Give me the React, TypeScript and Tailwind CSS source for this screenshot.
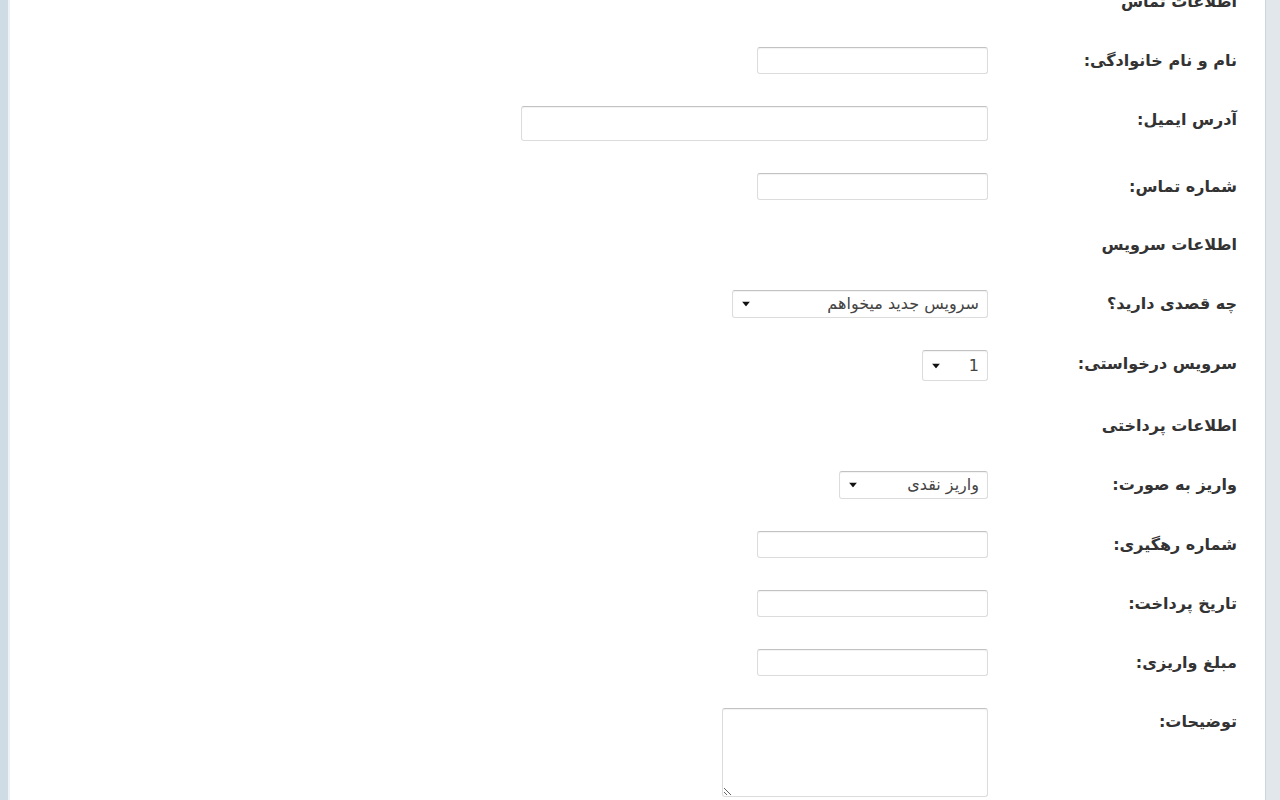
import type { ReactNode } from "react";

const font = { fontFamily: '"DejaVu Sans", Tahoma, sans-serif' };

const inputCls =
  "h-[27px] bg-white rounded-[3px] border border-[#dcdcdc] border-t-[#c2c2c2] shadow-[inset_0_1px_1px_rgba(0,0,0,0.05)] outline-none";

function Row({ label, children }: { label: string; children?: ReactNode }) {
  return (
    <div className="flex items-start">
      <div className="w-[249px] h-[27px] shrink-0 text-right leading-[28px] text-[16px] font-bold text-[#333]">{label}</div>
      {children}
    </div>
  );
}

function Header({ label }: { label: string }) {
  return (
    <div className="h-[26px] w-[249px] text-right leading-[26px] text-[16px] font-bold text-[#333]">{label}</div>
  );
}

function Select({ value, width, height }: { value: string; width: string; height: string }) {
  return (
    <div className={`relative ${width} ${height}`}>
      <select
        defaultValue={value}
        className={`${inputCls} ${height} w-full appearance-none pr-[8px] pl-[24px] text-[16px] text-[#444]`}
        style={font}
      >
        <option>{value}</option>
      </select>
      <svg className="pointer-events-none absolute left-[10px] top-1/2 -translate-y-1/2" width="8" height="5" viewBox="0 0 8 5">
        <path d="M0 0h8L4 5z" fill="#111" />
      </svg>
    </div>
  );
}

export default function App() {
  return (
    <div className="flex h-[800px] w-full overflow-hidden bg-white" style={font}>
      <div className="w-[10px] shrink-0 bg-[#cfdce6] border-r-2 border-[#eef3f6]" />
      <div dir="rtl" className="flex-1 pr-[28px]">
        <div className="flex flex-col gap-[32px] mt-[-11px]">
          <Header label="اطلاعات تماس" />
          <Row label="نام و نام خانوادگی:">
            <input className={`${inputCls} w-[231px]`} />
          </Row>
          <Row label="آدرس ایمیل:">
            <input className={`${inputCls} w-[467px] h-[35px]`} />
          </Row>
          <Row label="شماره تماس:">
            <input className={`${inputCls} w-[231px]`} />
          </Row>
          <Header label="اطلاعات سرویس" />
          <Row label="چه قصدی دارید؟">
            <Select value="سرویس جدید میخواهم" width="w-[256px]" height="h-[28px]" />
          </Row>
          <Row label="سرویس درخواستی:">
            <Select value="1" width="w-[66px]" height="h-[31px]" />
          </Row>
          <Header label="اطلاعات پرداختی" />
          <Row label="واریز به صورت:">
            <Select value="واریز نقدی" width="w-[149px]" height="h-[28px]" />
          </Row>
          <Row label="شماره رهگیری:">
            <input className={`${inputCls} w-[231px]`} />
          </Row>
          <Row label="تاریخ پرداخت:">
            <input className={`${inputCls} w-[231px]`} />
          </Row>
          <Row label="مبلغ واریزی:">
            <input className={`${inputCls} w-[231px]`} />
          </Row>
          <Row label="توضیحات:">
            <textarea className={`${inputCls} w-[266px] h-[89px] resize`} />
          </Row>
        </div>
      </div>
      <div className="w-[15px] shrink-0 bg-[#e2e7eb] border-l border-[#cdd4da]" />
    </div>
  );
}
